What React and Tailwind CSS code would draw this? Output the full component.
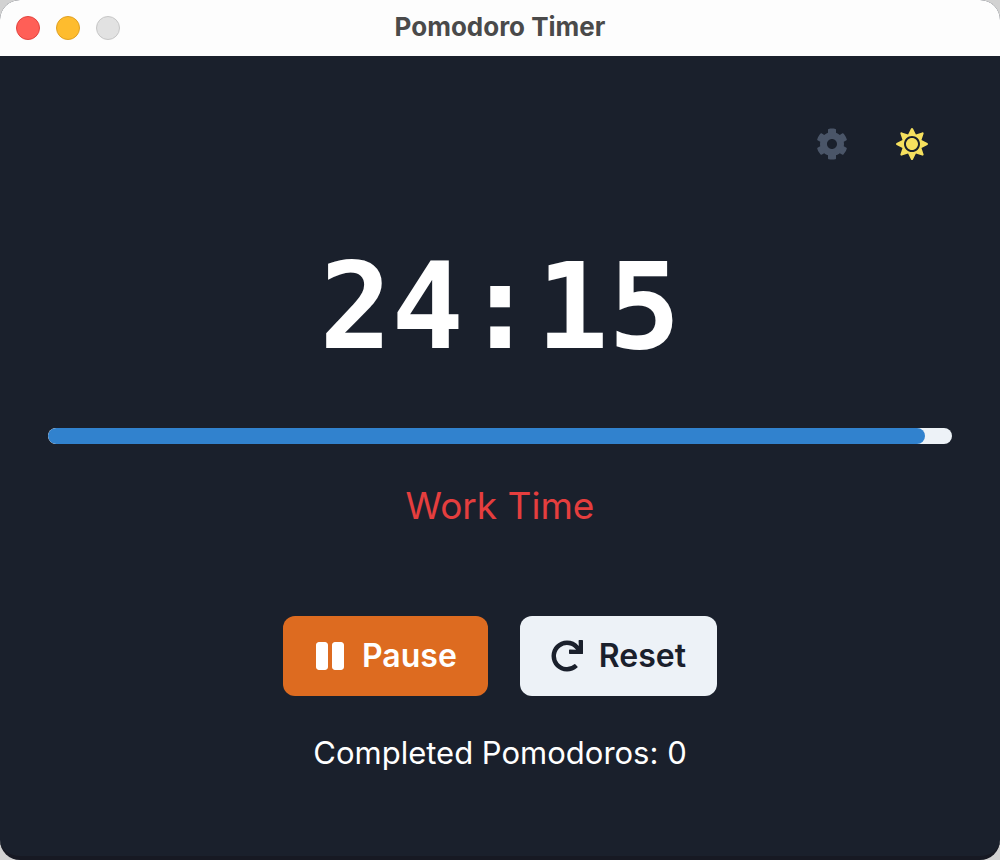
import { FaCog, FaPause, FaRedo, FaSun } from "react-icons/fa";

const TOTAL_SECONDS = 25 * 60;

function TitleBar() {
  return (
    <header className="grid h-14 grid-cols-[1fr_auto_1fr] items-center bg-[#fdfdfd] px-4">
      <div className="flex gap-4">
        <button aria-label="Close" className="size-6 rounded-full border border-[#e2443f] bg-[#ff5f57]" />
        <button aria-label="Minimize" className="size-6 rounded-full border border-[#dfa023] bg-[#febc2e]" />
        <button aria-label="Zoom" disabled className="size-6 rounded-full border border-[#c6c6c6] bg-[#e2e2e2]" />
      </div>
      <h1 className="pb-0.5 text-[26px] leading-8 font-bold text-[#4a4a4a]">Pomodoro Timer</h1>
    </header>
  );
}

export default function App() {
  const remaining = 24 * 60 + 15;
  const minutes = String(Math.floor(remaining / 60)).padStart(2, "0");
  const seconds = String(remaining % 60).padStart(2, "0");

  return (
    <div className="min-h-screen bg-[#d2d2d2] font-['Inter','Liberation_Sans',sans-serif]">
      <div className="flex min-h-screen flex-col overflow-hidden rounded-[20px] border-b-4 border-[#171923] bg-[#1a202c]">
        <TitleBar />
        <main className="flex flex-1 flex-col items-center p-12 text-white">
          <div className="flex self-end text-[32px]">
            <button aria-label="Settings" className="flex size-20 items-center justify-center text-[#4a5568]">
              <FaCog />
            </button>
            <button aria-label="Toggle color mode" className="flex size-20 items-center justify-center text-[#f6e05e]">
              <FaSun />
            </button>
          </div>
          <div className="mt-12 pb-1.5 font-['DejaVu_Sans_Mono',monospace] text-[120px] leading-[150px] font-bold">
            {minutes}:{seconds}
          </div>
          <div
            role="progressbar"
            aria-label="Time remaining"
            aria-valuenow={remaining}
            aria-valuemax={TOTAL_SECONDS}
            className="mt-10 h-4 w-full overflow-hidden rounded-lg bg-[#edf2f7]"
          >
            <div
              className="h-full rounded-lg bg-[#3182ce]"
              style={{ width: `${(remaining / TOTAL_SECONDS) * 100}%` }}
            />
          </div>
          <p className="mt-8 text-[37px] leading-15 text-[#e53e3e]">Work Time</p>
          <div className="mt-20 flex gap-8 text-[32px] leading-10 font-semibold">
            <button className="flex h-20 items-center gap-4 rounded-xl bg-[#dd6b20] px-[31px]">
              <FaPause className="size-8" />
              Pause
            </button>
            <button className="flex h-20 items-center gap-4 rounded-xl bg-[#edf2f7] px-[31px] text-[#1a202c]">
              <FaRedo className="size-8" />
              Reset
            </button>
          </div>
          <p className="mt-8 text-[31px] leading-[50px]">Completed Pomodoros: 0</p>
        </main>
      </div>
    </div>
  );
}
